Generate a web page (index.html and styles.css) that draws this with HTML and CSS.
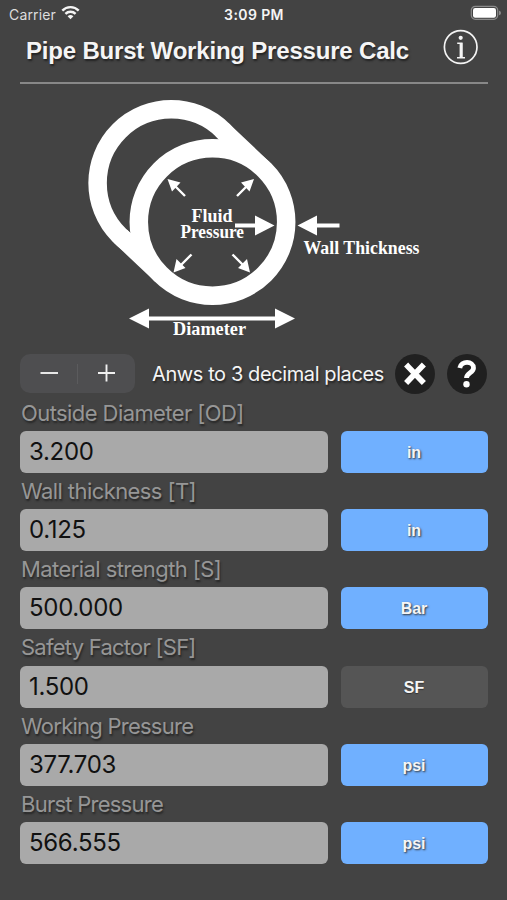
FILE: index.html
```html
<!DOCTYPE html>
<html lang="en">
<head>
<meta charset="utf-8">
<title>Pipe Burst Working Pressure Calc</title>
<link rel="stylesheet" href="styles.css">
</head>
<body>
<div class="status">
  <div class="carrier">Carrier
    <svg class="wifi" width="19" height="15" viewBox="0 0 19 15"><g fill="none" stroke="#f5f5f5" stroke-width="2.4"><path d="M1.3 5.6a11.5 11.5 0 0 1 16.4 0"/><path d="M4.4 8.9a7.2 7.2 0 0 1 10.2 0"/></g><path d="M9.5 14.3L6.6 11.3a4.2 4.2 0 0 1 5.8 0z" fill="#f5f5f5"/></svg>
  </div>
  <div class="time">3:09 PM</div>
  <svg class="battery" width="32" height="16" viewBox="0 0 32 16"><rect x="1.3" y="1.3" width="26.4" height="13" rx="4" fill="none" stroke="#8b8b8b" stroke-width="1.2"/><rect x="3" y="3" width="23" height="9.7" rx="2.2" fill="#fff"/><path d="M29 5.5q2 .6 2 2.4t-2 2.4z" fill="#8b8b8b"/></svg>
</div>
<header class="header">
  <h1 class="title">Pipe Burst Working Pressure Calc</h1>
  <svg class="info" width="36" height="36" viewBox="0 0 36 36"><circle cx="17.700" cy="18" r="16.3" fill="none" stroke="#f4f4f4" stroke-width="1.7"/><circle cx="17.7" cy="8.800" r="2.1" fill="#f4f4f4"/><path d="M14.2 14.2h4.6v14.3M14 28.8h8" fill="none" stroke="#f4f4f4" stroke-width="1.6"/><path d="M18 14v14.5" stroke="#f4f4f4" stroke-width="2.800"/></svg>
</header>
<svg class="diagram" width="507" height="261" viewBox="0 84 507 261">
  <g fill="none" stroke="#fff" stroke-width="18.5">
    <circle cx="171.3" cy="183" r="73.7"/>
    <path d="M222 129.6L263.2 168.6M120.6 236.4L161.8 275.4"/>
    <circle cx="212.5" cy="222" r="73.7" fill="#434343"/>
  </g>
  <g stroke="#fff" stroke-width="2.4">
    <path d="M185 196L173 184M237 196L249 184M191.500 254.500L178 268M232.500 254.500L246 268"/>
    <path d="M235 225.500H258M315 225.500H339.500M145 318.500H280" stroke-width="4"/>
  </g>
  <g fill="#fff">
    <path d="M167.500 179l13 3.500l-8.500 9zM254 179l-13 3.500l8.500 9zM173.500 272.500l3-13.500l9 9zM250 272.500l-3-13.500l-9 9z"/>
    <path d="M274.500 225.500L255 215.500v20zM297.500 225.500L317 215.500v20zM129 318.500L149 308.500v20zM295 318.500L275 308.500v20z"/>
  </g>
  <g class="caption">
    <text x="191.500" y="222" textLength="41" lengthAdjust="spacingAndGlyphs">Fluid</text>
    <text x="180.500" y="238" textLength="63.500" lengthAdjust="spacingAndGlyphs">Pressure</text>
    <text x="303.500" y="254" textLength="116" lengthAdjust="spacingAndGlyphs">Wall Thickness</text>
    <text x="173" y="335" textLength="73" lengthAdjust="spacingAndGlyphs">Diameter</text>
  </g>
</svg>
<main class="content">
  <div class="controls">
    <div class="stepper">
      <svg width="57" height="39" viewBox="0 0 57 39"><path d="M20.500 19h17.500" stroke="#f0f0f0" stroke-width="1.900"/></svg>
      <i class="divider"></i>
      <svg width="57" height="39" viewBox="0 0 57 39"><path d="M20 19h17M28.500 10.500v17" stroke="#f0f0f0" stroke-width="1.900"/></svg>
    </div>
    <div class="places">Anws to 3 decimal places</div>
    <svg class="clear" width="40" height="40" viewBox="0 0 40 40"><circle cx="20" cy="20" r="20" fill="#202020"/><path d="M12.500 12L27.500 27.500M27.500 12L12.500 27.500" stroke="#fff" stroke-width="6.200" stroke-linecap="square" stroke-linejoin="round" transform="translate(1.600 1.600) scale(.92)"/></svg>
    <svg class="help" width="40" height="40" viewBox="0 0 40 40"><circle cx="20" cy="20" r="20" fill="#202020"/><path d="M12.800 14C14 6.500 26.500 6.700 26.500 14C26.500 19 19.500 18.500 19.500 24" fill="none" stroke="#fff" stroke-width="4.800"/><circle cx="19.500" cy="30.300" r="3.200" fill="#fff"/></svg>
  </div>
  <div class="label">Outside Diameter [OD]</div>
  <div class="row"><div class="field">3.200</div><div class="unit">in</div></div>
  <div class="label">Wall thickness [T]</div>
  <div class="row"><div class="field">0.125</div><div class="unit">in</div></div>
  <div class="label">Material strength [S]</div>
  <div class="row"><div class="field">500.000</div><div class="unit">Bar</div></div>
  <div class="label tight">Safety Factor [SF]</div>
  <div class="row"><div class="field">1.500</div><div class="unit plain">SF</div></div>
  <div class="label tight">Working Pressure</div>
  <div class="row"><div class="field">377.703</div><div class="unit">psi</div></div>
  <div class="label tight">Burst Pressure</div>
  <div class="row"><div class="field">566.555</div><div class="unit">psi</div></div>
</main>
</body>
</html>
```
FILE: styles.css
```css
* { box-sizing: border-box; }
body { margin: 0; width: 507px; height: 900px; overflow: hidden; background: #434343; color: #f5f5f5; font-family: Inter, "Liberation Sans", sans-serif; }
svg { display: block; flex: none; }
.status { display: grid; grid-template-columns: 1fr auto 1fr; align-items: center; height: 28px; padding: 0 5px 0 9px; font-size: 14px; }
.carrier { display: flex; align-items: center; gap: 5px; color: #ddd; letter-spacing: .15px; }
.wifi { margin-top: -3px; }
.time { margin-right: 3px; font-weight: 600; letter-spacing: .4px; }
.battery { justify-self: end; margin-top: -2px; }
.header { display: flex; align-items: center; justify-content: space-between; height: 56px; margin: 0 19px 0 20px; padding: 0 9px 16px 6px; border-bottom: 2px solid #888; }
.title { margin: 8px 0 0; font: bold 24px/30px "Liberation Sans", sans-serif; letter-spacing: -.19px; white-space: nowrap; text-shadow: 1px 2px 2px #222; }
.content { padding: 8.800px 20px 0 20px; }
.controls { display: flex; align-items: center; height: 40px; }
.stepper { display: flex; align-items: center; width: 115px; height: 39px; border-radius: 10px; background: #4e4e50; }
.divider { width: 1px; height: 20px; background: #5b5b5d; }
.places { width: 241px; margin-left: 17px; font-size: 20px; line-height: 38px; letter-spacing: -.4px; white-space: nowrap; text-shadow: 1px 2px 2px #222; }
.help { margin-left: 12px; }
.clear { margin-left: 2px; }
.label { height: 37.200px; padding: 4px 0 0 1px; font-size: 22px; line-height: 30px; letter-spacing: -.58px; color: #969696; white-space: nowrap; text-shadow: 1px 2px 2px #252525; }
.label.tight { letter-spacing: -.75px; }
.row { display: grid; grid-template-columns: 308px 147px; gap: 12.500px; height: 41px; }
.field { height: 42px; padding-left: 9px; border-radius: 6px; background: #a9a9a9; color: #111; font-size: 24px; line-height: 42.500px; letter-spacing: -.3px; }
.unit { height: 42px; border-radius: 6px; background: #70b0ff; text-align: center; font: bold 16px/43px "Liberation Sans", sans-serif; text-shadow: 1px 1px 2px #333; }
.unit.plain { background: #555; text-shadow: 0 1px 1px #333; }
.caption { fill: #fff; font: bold 18px "Liberation Serif", serif; }
```
